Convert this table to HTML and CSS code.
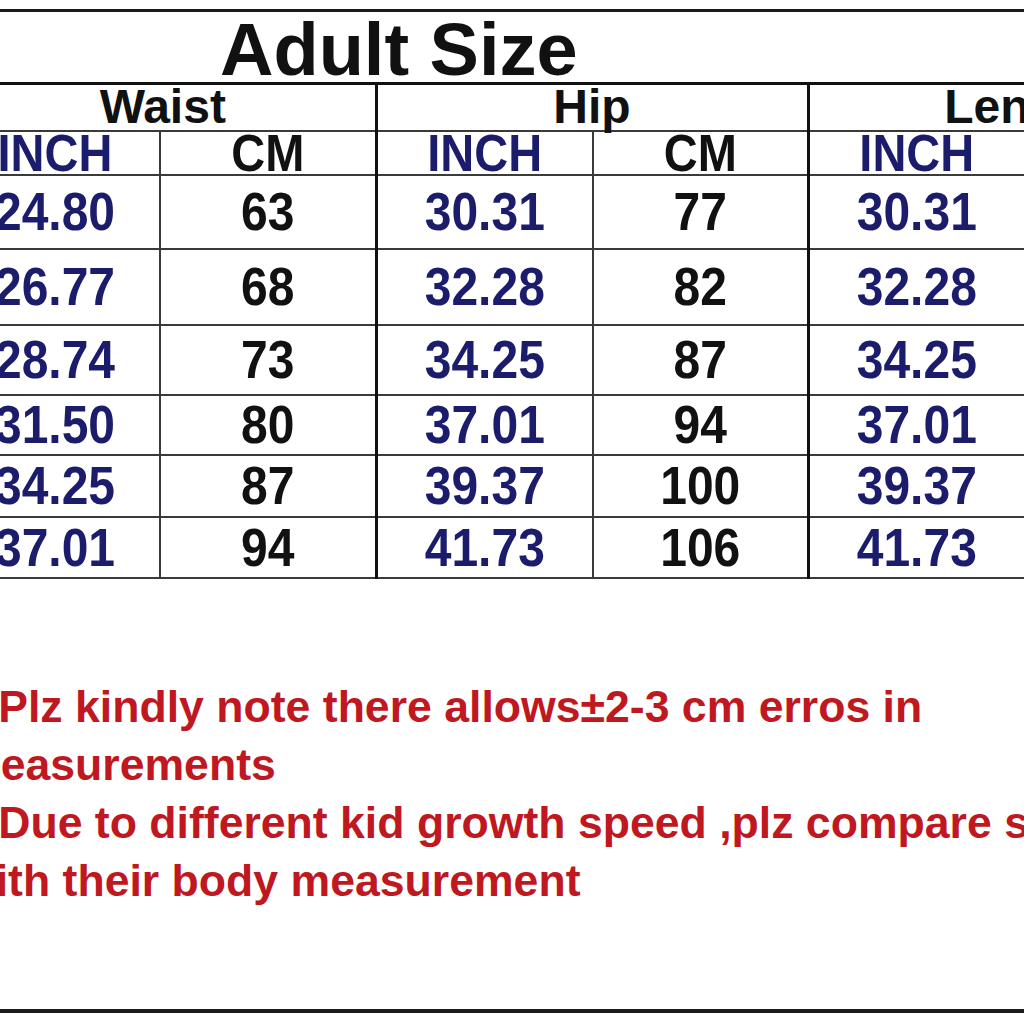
FILE: index.html
```html
<!DOCTYPE html>
<html lang="en">
<head>
  <meta charset="UTF-8">
  <title>Adult Size Chart</title>
  <link rel="stylesheet" href="styles.css">
</head>
<body>
  <div class="sheet">
    <h1 class="title">Adult Size</h1>

    <table class="chart">
      <colgroup>
        <col class="c1"><col class="c2"><col class="c3"><col class="c4"><col class="c5"><col class="c6">
      </colgroup>
      <thead>
        <tr class="group-row">
          <th colspan="2">Waist</th>
          <th colspan="2">Hip</th>
          <th colspan="2">Length</th>
        </tr>
        <tr class="unit-row">
          <th class="inch"><span class="t">INCH</span></th>
          <th><span class="t">CM</span></th>
          <th class="inch"><span class="t">INCH</span></th>
          <th><span class="t">CM</span></th>
          <th class="inch"><span class="t">INCH</span></th>
          <th><span class="t">CM</span></th>
        </tr>
      </thead>
      <tbody>
        <tr>
          <td class="inch"><span class="t">24.80</span></td><td><span class="t">63</span></td>
          <td class="inch"><span class="t">30.31</span></td><td><span class="t">77</span></td>
          <td class="inch"><span class="t">30.31</span></td><td><span class="t">77</span></td>
        </tr>
        <tr>
          <td class="inch"><span class="t">26.77</span></td><td><span class="t">68</span></td>
          <td class="inch"><span class="t">32.28</span></td><td><span class="t">82</span></td>
          <td class="inch"><span class="t">32.28</span></td><td><span class="t">82</span></td>
        </tr>
        <tr>
          <td class="inch"><span class="t">28.74</span></td><td><span class="t">73</span></td>
          <td class="inch"><span class="t">34.25</span></td><td><span class="t">87</span></td>
          <td class="inch"><span class="t">34.25</span></td><td><span class="t">87</span></td>
        </tr>
        <tr>
          <td class="inch"><span class="t">31.50</span></td><td><span class="t">80</span></td>
          <td class="inch"><span class="t">37.01</span></td><td><span class="t">94</span></td>
          <td class="inch"><span class="t">37.01</span></td><td><span class="t">94</span></td>
        </tr>
        <tr>
          <td class="inch"><span class="t">34.25</span></td><td><span class="t">87</span></td>
          <td class="inch"><span class="t">39.37</span></td><td><span class="t">100</span></td>
          <td class="inch"><span class="t">39.37</span></td><td><span class="t">100</span></td>
        </tr>
        <tr>
          <td class="inch"><span class="t">37.01</span></td><td><span class="t">94</span></td>
          <td class="inch"><span class="t">41.73</span></td><td><span class="t">106</span></td>
          <td class="inch"><span class="t">41.73</span></td><td><span class="t">106</span></td>
        </tr>
      </tbody>
    </table>

    <div class="notes">
      <p>1.Plz kindly note there allows±2-3 cm erros in</p>
      <p>measurements</p>
      <p>2.Due to different kid growth speed ,plz compare size</p>
      <p>with their body measurement</p>
    </div>
  </div>
</body>
</html>
```

FILE: styles.css
```css
body {
  margin: 0;
  background: #fff;
  overflow: hidden;
  font-family: 'Liberation Sans', Arial, sans-serif;
}

.sheet {
  width: 1290px;
  margin-left: -51px;
  margin-top: 9px;
  border-top: 3px solid #1a1a1a;
  border-bottom: 4px solid #1a1a1a;
  padding-bottom: 99px;
}

.title {
  margin: 0;
  height: 68px;
  padding-top: 2px;
  line-height: 71px;
  padding-left: 271px;
  font-size: 74px;
  font-weight: bold;
  color: #111;
}

.chart {
  border-collapse: collapse;
  table-layout: fixed;
  width: 1290px;
  font-weight: bold;
  color: #111;
}

.c1 { width: 210px; }
.c2 { width: 216px; }
.c3 { width: 217px; }
.c4 { width: 215px; }
.c5 { width: 217px; }
.c6 { width: 215px; }

.chart th,
.chart td {
  padding: 0;
  text-align: center;
  border: 2px solid #3a3a3a;
  font-size: 47px;
  line-height: 1;
}

.group-row th {
  border-top: 3px solid #111;
  height: 45px;
  vertical-align: top;
  line-height: 43px;
  font-size: 48px;
}

.group-row th + th,
.chart td:nth-child(3),
.chart td:nth-child(5),
.unit-row th:nth-child(3),
.unit-row th:nth-child(5) {
  border-left: 3px solid #111;
}

.unit-row th {
  height: 42px;
  line-height: 42px;
}

.inch {
  color: #1c1c6c;
}

.t {
  display: inline-block;
  transform: scaleY(1.1);
}

.chart td {
  font-size: 48px;
}

tbody tr:nth-child(1) td { height: 72px; }
tbody tr:nth-child(2) td { height: 74px; }
tbody tr:nth-child(3) td { height: 68px; }
tbody tr:nth-child(4) td { height: 58px; }
tbody tr:nth-child(5) td { height: 60px; }
tbody tr:nth-child(6) td { height: 59px; }

.notes {
  margin-top: 99px;
  padding-left: 12px;
  color: #bf1820;
  font-size: 44.6px;
  font-weight: bold;
  line-height: 58px;
  white-space: nowrap;
}

.notes p {
  margin: 0;
}
```
